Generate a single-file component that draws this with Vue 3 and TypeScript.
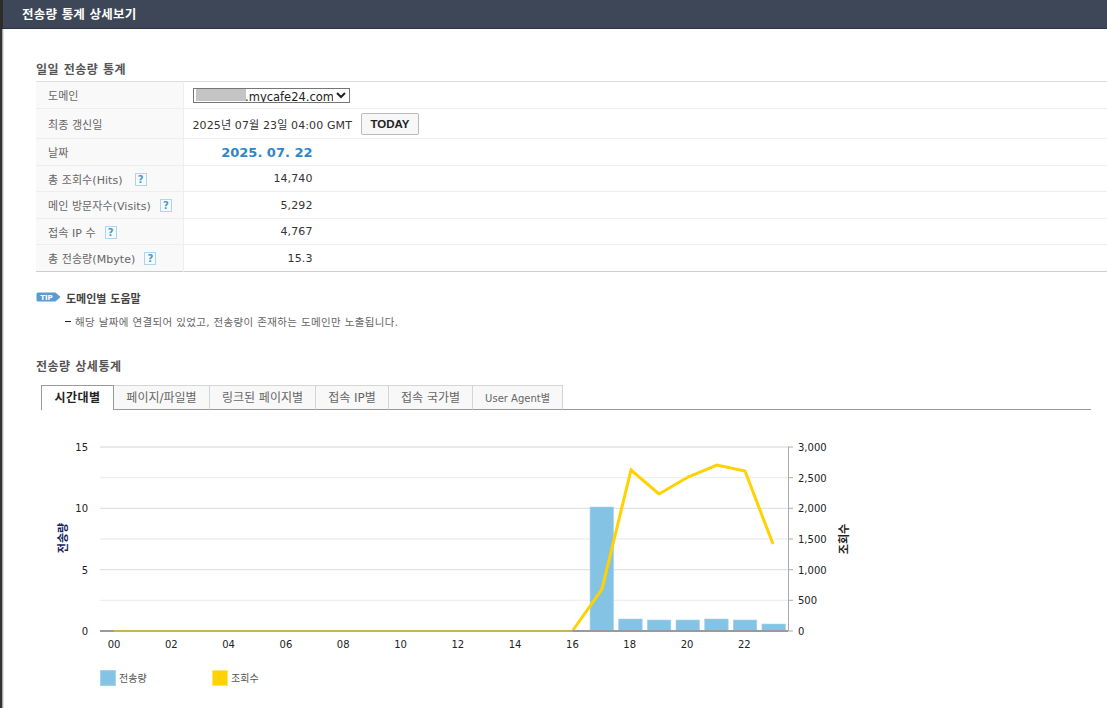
<script setup lang="ts">
interface Row { label: string; value: string }
const rows: Row[] = [
  { label: '총 조회수(Hits)', value: '14,740' },
  { label: '메인 방문자수(Visits)', value: '5,292' },
  { label: '접속 IP 수', value: '4,767' },
  { label: '총 전송량(Mbyte)', value: '15.3' },
]
const tabs = ['시간대별', '페이지/파일별', '링크된 페이지별', '접속 IP별', '접속 국가별', 'User Agent별']
const hx = (h: number) => 114 + 28.65 * h
const grid = [447, 477.7, 508.3, 539, 569.7, 600.3]
const leftTicks = [{ t: '15', y: 447 }, { t: '10', y: 508.3 }, { t: '5', y: 569.7 }, { t: '0', y: 631 }]
const rightTicks = [
  { t: '3,000', y: 447 }, { t: '2,500', y: 477.7 }, { t: '2,000', y: 508.3 }, { t: '1,500', y: 539 },
  { t: '1,000', y: 569.7 }, { t: '500', y: 600.3 }, { t: '0', y: 631 },
]
const hours = Array.from({ length: 12 }, (_, i) => i * 2)
const bars = [
  { h: 17, top: 507 }, { h: 18, top: 619 }, { h: 19, top: 620 }, { h: 20, top: 620 },
  { h: 21, top: 619 }, { h: 22, top: 620 }, { h: 23, top: 624 },
]
const linePts = [
  [hx(16), 631], [602, 589], [631, 470], [659, 494], [688, 477], [717, 465], [745, 471], [773, 544],
].map((p) => p.join(',')).join(' ')
</script>

<template>
  <div class="page">
    <header class="topbar"><h1>전송량 통계 상세보기</h1></header>
    <main class="content">
      <h2 class="section first">일일 전송량 통계</h2>
      <table class="stats">
        <tbody>
          <tr class="r27">
            <th>도메인</th>
            <td>
              <span class="selwrap">
                <select class="domain"><option>&nbsp;&nbsp;&nbsp;&nbsp;&nbsp;&nbsp;&nbsp;&nbsp;&nbsp;&nbsp;&nbsp;&nbsp;&nbsp;.mycafe24.com</option></select>
                <i class="mask"></i>
              </span>
            </td>
          </tr>
          <tr class="r30">
            <th>최종 갱신일</th>
            <td><span class="updated">2025년 07월 23일 04:00 GMT</span><button class="today">TODAY</button></td>
          </tr>
          <tr class="r27">
            <th>날짜</th>
            <td><div class="val date">2025. 07. 22</div></td>
          </tr>
          <tr v-for="r in rows" :key="r.label" class="metric">
            <th>{{ r.label }}<span class="help">?</span></th>
            <td><div class="val">{{ r.value }}</div></td>
          </tr>
        </tbody>
      </table>

      <div class="tip">
        <svg class="tipicon" width="25" height="10" viewBox="0 0 25 10">
          <path d="M2 .5H19.500L24.500 5 19.500 9.500H2Q.5 9.500 .5 8V2Q.5 .5 2 .5Z" fill="#5b9bd1" />
          <text x="10.500" y="7.500" text-anchor="middle" class="tiptext">TIP</text>
        </svg>
        <strong>도메인별 도움말</strong>
      </div>
      <p class="note"><i class="dash"></i>해당 날짜에 연결되어 있었고, 전송량이 존재하는 도메인만 노출됩니다.</p>

      <h2 class="section second">전송량 상세통계</h2>
      <nav class="tabs">
        <a v-for="(t, i) in tabs" :key="t" class="tab" :class="[{ active: i === 0 }, 't' + i]">{{ t }}</a>
      </nav>
    </main>

    <svg class="chart" width="1107" height="298" viewBox="0 410 1107 298">
      <g class="gridlines">
        <line v-for="y in grid" :key="y" x1="100" x2="788" :y1="y" :y2="y" />
      </g>
      <line x1="788.500" x2="788.500" y1="447" y2="631" stroke="#aaa" />
      <line v-for="t in rightTicks" :key="t.t" x1="788" x2="793" :y1="t.y" :y2="t.y" stroke="#aaa" />
      <rect v-for="b in bars" :key="b.h" :x="hx(b.h) - 11" :y="b.top" width="23.500" :height="631 - b.top" fill="#85c3e4" stroke="#a5d3ec" stroke-width=".6" />
      <polyline :points="linePts" fill="none" stroke="#ffd200" stroke-width="3" stroke-linejoin="miter" />
      <line x1="100" x2="788" y1="631" y2="631" stroke="#9a9a9a" stroke-width="2" />
      <line :x1="hx(0)" :x2="hx(16)" y1="631" y2="631" stroke="#c9b455" stroke-width="2" />
      <text v-for="t in leftTicks" :key="'l' + t.t" x="88" :y="t.y + 4" text-anchor="end" class="tick">{{ t.t }}</text>
      <text v-for="t in rightTicks" :key="'r' + t.t" x="798" :y="t.y + 4" class="tick">{{ t.t }}</text>
      <text v-for="h in hours" :key="h" :x="hx(h)" y="648" text-anchor="middle" class="tick">{{ String(h).padStart(2, '0') }}</text>
      <text transform="translate(67 538) rotate(-90)" text-anchor="middle" class="axis navy">전송량</text>
      <text transform="translate(848 539) rotate(-90)" text-anchor="middle" class="axis">조회수</text>
      <rect x="100.500" y="670.500" width="15" height="15" fill="#85c3e4" stroke="#a5d3ec" />
      <text x="119" y="682" class="legend">전송량</text>
      <rect x="212.500" y="670.500" width="15" height="15" fill="#ffd200" stroke="#ffe36a" />
      <text x="231" y="682" class="legend">조회수</text>
    </svg>
  </div>
</template>

<style>
html, body { margin: 0; background: #fff; overflow: hidden; }
</style>

<style scoped>
.page {
  width: 1107px;
  height: 708px;
  overflow: hidden;
  box-sizing: border-box;
  padding-left: 3px;
  background: linear-gradient(90deg, #333 0, #333 1.500px, #8a8a8a 2px, #c8c8c8 3px, #fff 4px);
  font-family: "DejaVu Sans", "Noto Sans CJK KR", sans-serif;
  font-size: 11px;
  color: #333;
}
.topbar {
  height: 29px;
  background: #3d4757;
  border-bottom: 1px solid #2c3541;
  box-shadow: -3px 0 0 #2c2c2c;
  box-sizing: border-box;
  padding-left: 19px;
}
.topbar h1 {
  margin: 0;
  font-size: 12.500px;
  line-height: 30px;
  font-weight: 700;
  color: #fff;
  letter-spacing: .2px;
}
.content { padding-left: 33px; }
.section {
  margin: 0;
  font-size: 12px;
  font-weight: 700;
  color: #555;
  line-height: 14px;
  letter-spacing: .5px;
}
.first { padding-top: 34px; height: 18px; }
.stats {
  width: 1071px;
  border-collapse: collapse;
  table-layout: fixed;
  border-top: 1px solid #ddd;
  border-bottom: 1px solid #ccc;
}
.stats th {
  width: 147px;
  box-sizing: border-box;
  background: #f9f9f9;
  border-right: 1px solid #eee;
  border-bottom: 1px solid #eee;
  padding: 0 0 0 12px;
  text-align: left;
  font-weight: 400;
  color: #666;
  font-size: 11px;
  letter-spacing: .06px;
}
.stats td {
  border-bottom: 1px solid #eee;
  padding: 0 0 0 9px;
  font-size: 11px;
  color: #333;
}
.stats tr:last-child th, .stats tr:last-child td { border-bottom: 0; }
.r27 { height: 27px; }
.r30 { height: 30px; }
.metric { height: 27px; }
.metric:nth-child(even) { height: 26px; }
.selwrap { position: relative; display: inline-block; vertical-align: middle; }
.domain {
  width: 157px;
  height: 15px;
  padding: 0;
  display: block;
  font-family: inherit;
  font-size: 11.500px;
  color: #222;
  background: #fff;
  border: 1px solid #767676;
  border-radius: 0;
}
.mask {
  position: absolute;
  left: 3px;
  top: 1px;
  width: 50px;
  height: 12px;
  background: #c4c4c4;
}
.updated { vertical-align: middle; letter-spacing: .12px; }
.today {
  margin-left: 9px;
  width: 58px;
  height: 22px;
  padding: 0;
  vertical-align: middle;
  font-family: "Liberation Sans", sans-serif;
  font-weight: 700;
  font-size: 11.500px;
  color: #222;
  background: #f7f7f7;
  border: 1px solid #bbb;
  border-radius: 2px;
}
.val { width: 120px; text-align: right; letter-spacing: .1px; }
.date { font-weight: 700; font-size: 13px; color: #2f86c9; letter-spacing: 0; }
.help {
  display: inline-block;
  width: 10px;
  height: 11px;
  line-height: 11px;
  margin-left: 9px;
  border: 1px solid #a9d6f0;
  text-align: center;
  font-size: 10px;
  font-weight: 700;
  color: #4a9ad0;
  vertical-align: 1px;
}
.metric:nth-child(4) .help { margin-left: 12px; }
.tip { display: flex; align-items: center; height: 14px; margin-top: 19px; gap: 5px; }
.tipicon { display: block; margin-top: -2px; }
.tiptext { font-size: 7px; font-weight: 700; fill: #fff; }
.tip strong { font-size: 11px; font-weight: 700; color: #444; }
.note {
  margin: 10px 0 0 29px;
  font-size: 10.500px;
  line-height: 14px;
  color: #666;
  position: relative;
  letter-spacing: .35px;
  padding-left: 10px;
}
.dash { position: absolute; left: 0; top: 6px; width: 6px; height: 1px; background: #222; }
.second { margin-top: 31px; }
.tabs {
  display: flex;
  margin: 11px 0 0 5px;
  width: 1050px;
  height: 25px;
  box-sizing: border-box;
  border-bottom: 1px solid #999;
}
.tab {
  box-sizing: border-box;
  height: 25px;
  line-height: 25px;
  text-align: center;
  background: #f8f8f8;
  border: 1px solid #d5d5d5;
  border-bottom: 1px solid #999;
  border-left: 0;
  color: #666;
  font-size: 12px;
}
.tab.active {
  background: #fff;
  color: #222;
  font-weight: 700;
  border: 1px solid #999;
  border-bottom: 0;
  letter-spacing: .4px;
}
.t0 { width: 73px; }
.t1 { width: 96px; }
.t2 { width: 106px; }
.t3 { width: 73px; }
.t4 { width: 84px; }
.t5 { width: 90px; font-size: 10px; }
.chart { display: block; margin-left: -3px; }
.gridlines line { stroke: #e2e2e2; stroke-width: 1.300; }
.gridlines line:nth-child(even) { stroke: #eeeeee; }
.tick { font-size: 10px; fill: #222; }
.axis { font-size: 11px; font-weight: 700; fill: #222; }
.navy { fill: #14225a; }
.legend { font-size: 10px; fill: #555; }
</style>
